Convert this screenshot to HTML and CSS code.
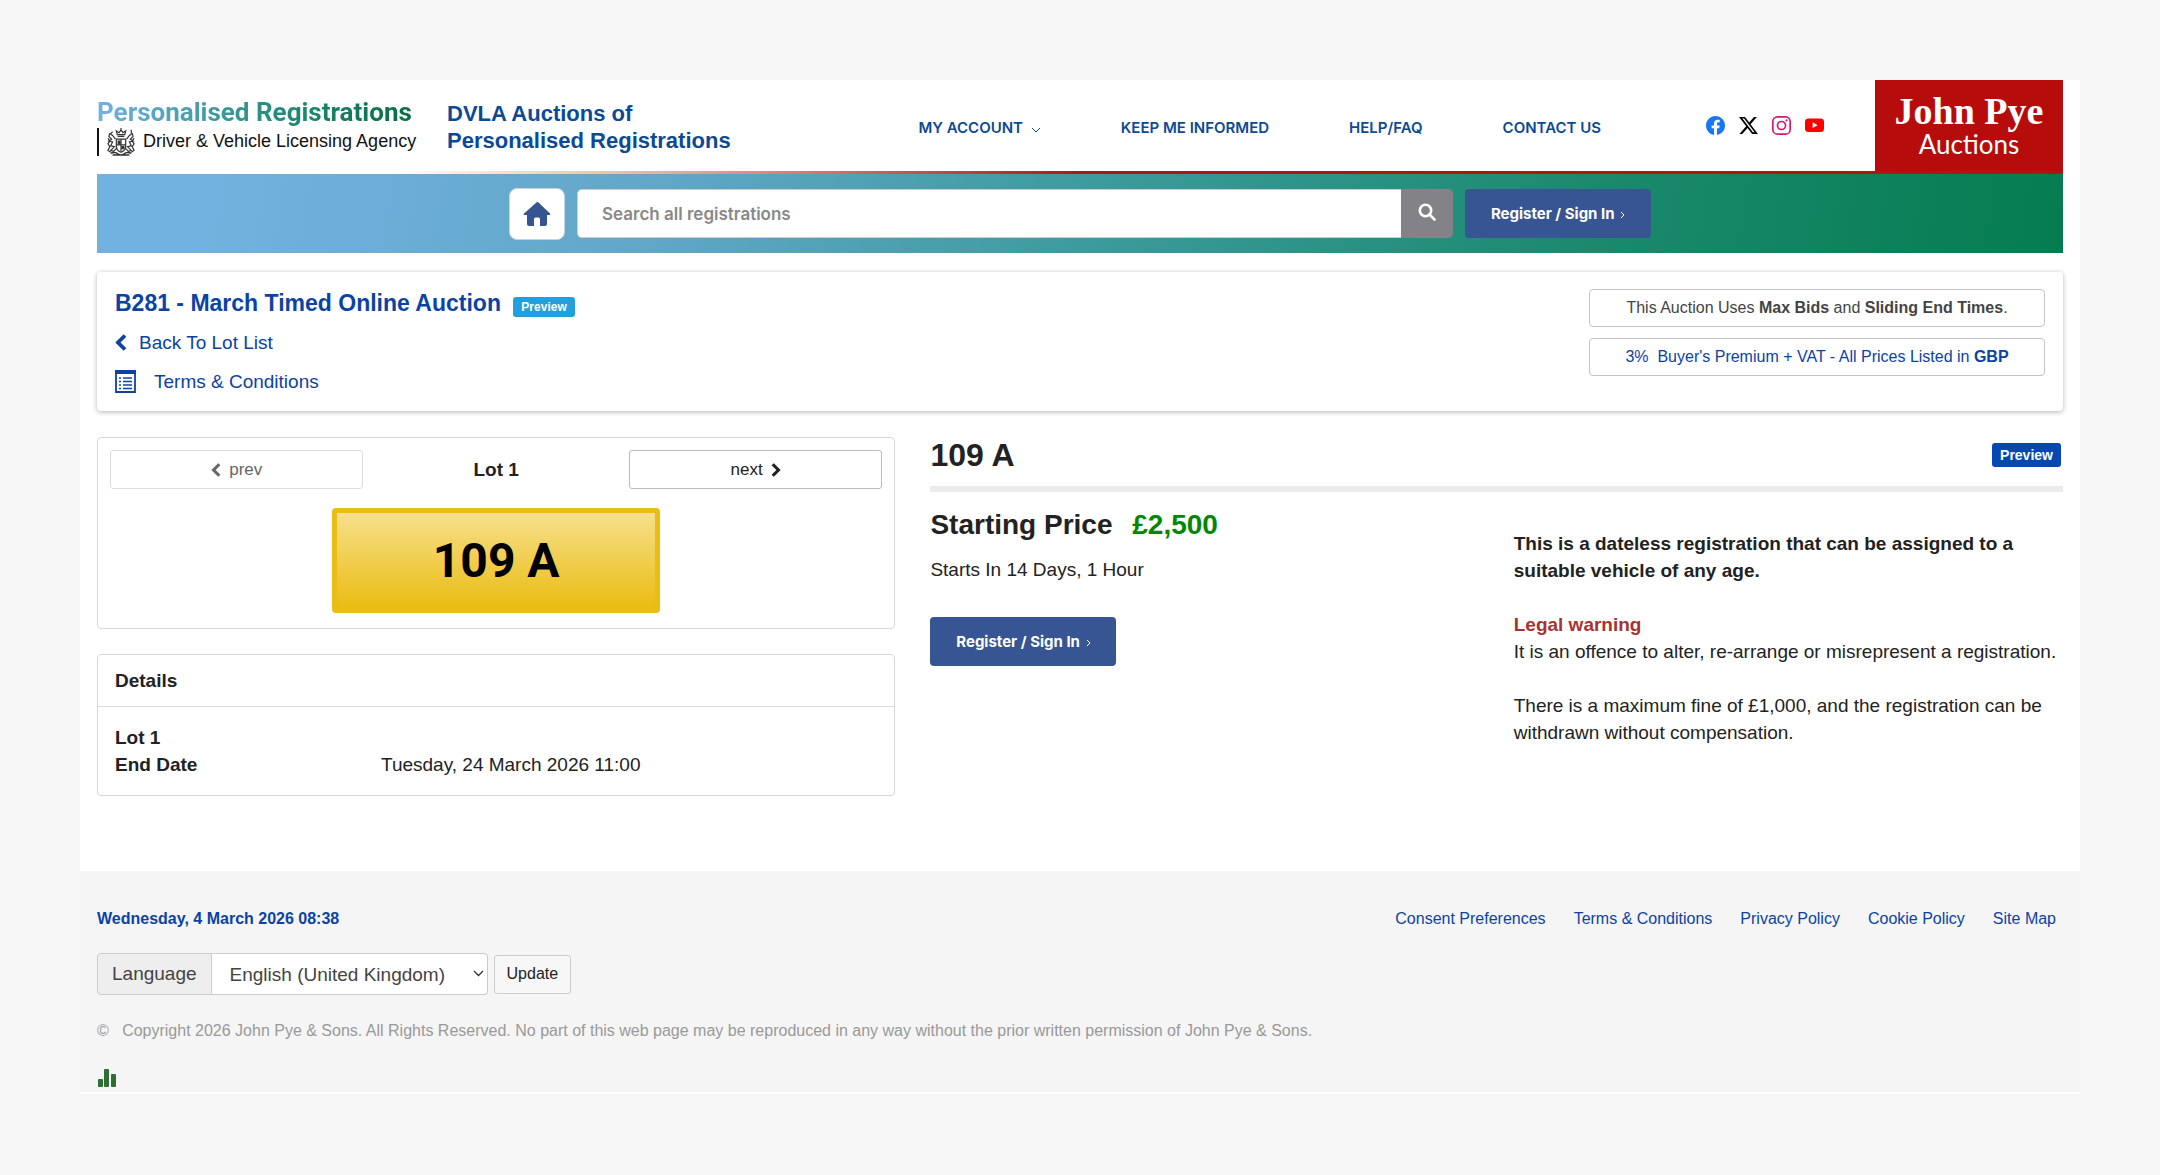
FILE: index.html
```
<!DOCTYPE html>
<html lang="en-GB">
<head>
<meta charset="utf-8">
<meta name="viewport" content="width=device-width, initial-scale=1">
<title>109 A - DVLA Auctions of Personalised Registrations</title>
<link rel="stylesheet" href="styles.css">
</head>

<body>
<div class="page">
  <header class="header">
    <a href="#" class="dvla">
      <span class="dvla-name">Personalised Registrations</span>
      <span class="dvla-agency">
        <svg class="crest" viewBox="0 0 32 30" fill="none" stroke="#333" stroke-width="1.3">
          <path d="M12 7l-1-4 3 2 2-3 2 3 3-2-1 4zM16 2V0M12.500 9h7M11 12h10v8q0 4-5 6-5-2-5-6zM16 12v13M11 18h10"/>
          <path d="M10 12L7 8 4 6 3 9l3 3-3 2 4 1-2 4 4 1-4 4 3 1 4-4M2 11l2 3-2 3 2 3-2 4 3 2M5 6l2-2M22 12l3-4 3-2 1 3-3 3 3 2-4 1 2 4-4 1 4 4-3 1-4-4M30 11l-2 3 2 3-2 3 2 4-3 2M27 6V2"/>
          <path d="M5 27q5-2 8 1 3 2 6 0 3-3 8-1M7 29h18" stroke-width="1.600"/>
          <path d="M13 14h2v3h-2zM17 20h2v2h-2z" fill="#333"/>
        </svg>
        Driver &amp; Vehicle Licensing Agency
      </span>
    </a>
    <div class="site-title">DVLA Auctions of<br>Personalised Registrations</div>
    <nav class="nav">
      <a href="#">MY ACCOUNT <svg width="10" height="6" viewBox="0 0 10 6"><path d="M1 1l4 4 4-4" fill="none" stroke="#0b4a94"/></svg></a>
      <a href="#">KEEP ME INFORMED</a>
      <a href="#">HELP/FAQ</a>
      <a href="#">CONTACT US</a>
    </nav>
    <div class="social">
      <a href="#" aria-label="Facebook"><svg viewBox="0 0 16 16" fill="#1877f2"><path d="M16 8.049c0-4.446-3.582-8.050-8-8.050C3.580 0-.002 3.603-.002 8.050c0 4.017 2.926 7.347 6.750 7.951v-5.625h-2.030V8.050H6.750V6.275c0-2.017 1.195-3.131 3.022-3.131.876 0 1.791.157 1.791.157v1.980h-1.009c-.993 0-1.303.621-1.303 1.258v1.510h2.218l-.354 2.326H9.250V16c3.824-.604 6.750-3.934 6.750-7.951"/></svg></a>
      <a href="#" aria-label="X"><svg viewBox="0 0 16 16" fill="#000"><path d="M12.600.750h2.454l-5.360 6.142L16 15.250h-4.937l-3.867-5.070-4.425 5.070H.316l5.733-6.570L0 .750h5.063l3.495 4.633L12.601.750Zm-.860 13.028h1.360L4.323 2.145H2.865z"/></svg></a>
      <a href="#" aria-label="Instagram"><svg viewBox="0 0 16 16" fill="none" stroke="#d6176f" stroke-width="1.400"><rect x=".7" y=".7" width="14.600" height="14.600" rx="4"/><circle cx="8" cy="8" r="3.400"/><circle cx="12.300" cy="3.700" r=".9" fill="#d6176f" stroke="none"/></svg></a>
      <a href="#" aria-label="YouTube"><svg viewBox="0 0 16 16"><rect y="2" width="16" height="11.500" rx="3" fill="#f00"/><path d="M6.400 5.200l4.200 2.500-4.200 2.500z" fill="#fff"/></svg></a>
    </div>
    <a href="#" class="johnpye"><span class="johnpye-name">John Pye</span><span class="johnpye-sub">Auctions</span></a>
  </header>

  <form class="banner">
    <a href="#" class="home" aria-label="Home"><svg width="28" height="26" viewBox="0 0 28 26" fill="#34558f"><path d="M14 1L1 12.500q-1 1.500 1 1.500h2v9q0 2 2 2h5v-7q0-1.500 1.500-1.500h3q1.500 0 1.500 1.500v7h5q2 0 2-2v-9h2q2 0 1-1.500L15.500 1.500Q14 .3 14 1z"/></svg></a>
    <div class="search">
      <input type="text" class="search-text" placeholder="Search all registrations" aria-label="Search all registrations">
      <button type="button" class="search-btn" aria-label="Search"><svg width="18" height="18" viewBox="0 0 18 18" fill="none" stroke="#fff" stroke-width="2.600"><circle cx="7.500" cy="7.500" r="5.700"/><path d="M11.500 11.500l5 5" stroke-linecap="round"/></svg></button>
    </div>
    <button type="button" class="register">Register / Sign In <svg width="5" height="8" viewBox="0 0 5 8"><path d="M1 1l3 3-3 3" fill="none" stroke="#fff"/></svg></button>
  </form>

  <main>
    <section class="auction">
      <div class="auction-info">
        <h1>B281 - March Timed Online Auction <span class="badge badge-info">Preview</span></h1>
        <a href="#" class="back"><svg width="12" height="17" viewBox="0 0 12 17"><path d="M10 1.500l-7 7 7 7" fill="none" stroke="#0b43a5" stroke-width="3.800"/></svg>Back To Lot List</a>
        <a href="#" class="terms"><svg width="21" height="23" viewBox="0 0 21 23" fill="none" stroke="#0b43a5"><path d="M1 1v21h19V1z" stroke-width="1.800"/><path d="M0 2h21" stroke-width="4"/><path d="M4 8h2M4 11.500h2M4 15h2M4 18.500h2M8 8h9M8 11.500h9M8 15h9M8 18.500h9" stroke-width="1.600"/></svg>Terms &amp; Conditions</a>
      </div>
      <div class="auction-notes">
        <div class="note">This Auction Uses <b>Max Bids</b> and <b>Sliding End Times</b>.</div>
        <a href="#" class="note">3%&nbsp; Buyer's Premium + VAT - All Prices Listed in <b>GBP</b></a>
      </div>
    </section>

    <div class="lot">
      <div class="lot-left">
        <section class="card lot-card">
          <div class="pager">
            <button type="button" disabled><svg width="10" height="14" viewBox="0 0 12 17"><path d="M10 1.500l-7 7 7 7" fill="none" stroke="#666" stroke-width="3.800"/></svg>prev</button>
            <b>Lot 1</b>
            <button type="button">next<svg width="10" height="14" viewBox="0 0 12 17"><path d="M2 1.500l7 7-7 7" fill="none" stroke="#222" stroke-width="3.800"/></svg></button>
          </div>
          <div class="plate">109 A</div>
        </section>
        <section class="card">
          <h2 class="card-title">Details</h2>
          <table class="details">
            <colgroup><col class="details-label"><col></colgroup>
            <tr><th colspan="2">Lot 1</th></tr>
            <tr><th>End Date</th><td>Tuesday, 24 March 2026 11:00</td></tr>
          </table>
        </section>
      </div>

      <div class="lot-right">
        <div class="lot-head">
          <h2>109 A</h2>
          <span class="badge">Preview</span>
        </div>
        <div class="lot-body">
          <div class="bid">
            <h3>Starting Price <span class="price">£2,500</span></h3>
            <p>Starts In 14 Days, 1 Hour</p>
            <button type="button" class="register">Register / Sign In <svg width="5" height="8" viewBox="0 0 5 8"><path d="M1 1l3 3-3 3" fill="none" stroke="#fff"/></svg></button>
          </div>
          <div class="legal">
            <p><b>This is a dateless registration that can be assigned to a suitable vehicle of any age.</b></p>
            <p><b class="warning">Legal warning</b><br>It is an offence to alter, re-arrange or misrepresent a registration.</p>
            <p>There is a maximum fine of £1,000, and the registration can be withdrawn without compensation.</p>
          </div>
        </div>
      </div>
    </div>
  </main>

  <footer class="footer">
    <div class="footer-top">
      <b>Wednesday, 4 March 2026 08:38</b>
      <nav class="footer-links">
        <a href="#">Consent Preferences</a>
        <a href="#">Terms &amp; Conditions</a>
        <a href="#">Privacy Policy</a>
        <a href="#">Cookie Policy</a>
        <a href="#">Site Map</a>
      </nav>
    </div>
    <form class="language">
      <label for="language">Language</label>
      <div class="select">
        <select id="language"><option>English (United Kingdom)</option></select>
        <svg width="11" height="7" viewBox="0 0 11 7"><path d="M1 1l4.500 4.500L10 1" fill="none" stroke="#333" stroke-width="1.300"/></svg>
      </div>
      <button type="button">Update</button>
    </form>
    <p class="copyright">©&nbsp;&nbsp; Copyright 2026 John Pye &amp; Sons. All Rights Reserved. No part of this web page may be reproduced in any way without the prior written permission of John Pye &amp; Sons.</p>
    <svg class="stats" width="20" height="18" viewBox="0 0 20 18" fill="#2f6f33"><rect x="1" y="10" width="5" height="8" rx="1"/><rect x="7" width="5" height="18" rx="1"/><rect x="14" y="5" width="5" height="13" rx="1"/></svg>
  </footer>
</div>
</body>
</html>
```
FILE: styles.css
```
* {
    box-sizing: border-box;
}

body {
    margin: 0;
    padding: 80px;
    background-color: #f7f7f7;
    color: #222;
    font-family: "Liberation Sans", Arial, sans-serif;
    font-size: 19px;
    line-height: 27px;
}

h1, h2, h3, p {
    margin: 0;
}

a {
    color: #0b43a5;
    text-decoration: none;
}

button {
    font-family: inherit;
    cursor: pointer;
}

svg {
    flex: none;
}

.page {
    background-color: #fff;
    padding-bottom: 2px;
}

/* header */
.header {
    display: flex;
    align-items: center;
    height: 94px;
    margin: 0 17px;
    border-bottom: 3px solid;
    border-image: linear-gradient(90deg, #fff 15%, #f3b9a5 27%, #b01515 50%, #b01515) 1;
}

.dvla {
    color: #111;
    width: 322px;
    white-space: nowrap;
}

.dvla-name {
    display: block;
    font-family: Roboto, "Liberation Sans", sans-serif;
    font-size: 26px;
    line-height: 32px;
    font-weight: bold;
    background: linear-gradient(90deg, #72b2e0, #1f8a75 60%, #066b3f);
    background-clip: text;
    color: transparent;
}

.dvla-agency {
    display: flex;
    align-items: center;
    gap: 6px;
    border-left: 2px solid #111;
    padding-left: 6px;
    font-size: 18px;
}

.crest {
    width: 32px;
    height: 28px;
}

.site-title {
    margin-left: 28px;
    padding-top: 2px;
    color: #0b4a94;
    font-size: 22px;
    font-weight: bold;
}

.nav {
    display: flex;
    gap: 80px;
    margin-left: auto;
    padding-top: 4px;
    font-family: Inter, "Open Sans", sans-serif;
    font-size: 15px;
    font-weight: 600;
}

.nav a {
    color: #0b4a94;
}

.nav svg {
    margin-left: 4px;
}

.social {
    display: flex;
    gap: 14px;
    margin: 0 51px 0 105px;
}

.social a {
    display: flex;
}

.social svg {
    width: 19px;
    height: 19px;
}

.johnpye {
    display: flex;
    flex-direction: column;
    align-items: center;
    align-self: stretch;
    width: 188px;
    padding-top: 12px;
    background-color: #b60c0c;
    color: #fff;
    font-family: "Liberation Serif", serif;
}

.johnpye-name {
    font-size: 38px;
    line-height: 38px;
    font-weight: bold;
}

.johnpye-sub {
    font-family: Lato, sans-serif;
    font-size: 26px;
    line-height: 28px;
}

/* search banner */
.banner {
    display: flex;
    justify-content: center;
    align-items: center;
    gap: 12px;
    height: 79px;
    margin: 0 17px;
    background: linear-gradient(100deg, #72b2e0 5%, #62a7c8 28%, #3a9a9a 52%, #1b8a6e 75%, #057c50);
}

.home {
    display: flex;
    align-items: center;
    justify-content: center;
    width: 56px;
    height: 52px;
    background-color: #fff;
    border: 1px solid #c8d4dc;
    border-radius: 8px;
}

.search {
    display: flex;
    width: 876px;
    height: 49px;
}

.search-text {
    flex: 1;
    min-width: 0;
    padding: 0 24px;
    border: 1px solid #ccc;
    border-right: 0;
    border-radius: 5px 0 0 5px;
    font-family: Inter, "Open Sans", sans-serif;
    font-size: 17px;
    font-weight: 600;
}

.search-text::placeholder {
    color: #888;
}

.search-btn {
    width: 52px;
    border: 0;
    border-radius: 0 5px 5px 0;
    background-color: #828287;
}

.register {
    width: 186px;
    height: 49px;
    border: 0;
    border-radius: 4px;
    background-color: #365592;
    color: #fff;
    font-family: Inter, "Open Sans", sans-serif;
    font-size: 15px;
    font-weight: 700;
}

.register svg {
    margin-left: 2px;
}

/* auction summary */
main {
    padding: 19px 17px 75px;
}

.auction {
    display: flex;
    justify-content: space-between;
    padding: 17px 18px 16px;
    border-radius: 4px;
    box-shadow: 0 1px 5px rgba(0, 0, 0, .3);
}

.auction-info {
    display: flex;
    flex-direction: column;
    gap: 12px;
}

.auction h1 {
    font-size: 23px;
    line-height: 28px;
    color: #0b43a5;
}

.back, .terms {
    display: flex;
    align-items: center;
}

.back {
    gap: 12px;
}

.terms {
    gap: 18px;
}

.auction-notes {
    display: flex;
    flex-direction: column;
    gap: 11px;
    width: 456px;
}

.note {
    height: 38px;
    border: 1px solid #c4c4c4;
    border-radius: 4px;
    color: #444;
    font-size: 16px;
    line-height: 36px;
    text-align: center;
}

a.note {
    color: #0b43a5;
}

.badge {
    display: inline-block;
    padding: 0 8px;
    border-radius: 3px;
    background-color: #0648b0;
    color: #fff;
    font-size: 14px;
    line-height: 24px;
    font-weight: bold;
}

.badge-info {
    margin-left: 6px;
    background-color: #249fde;
    font-size: 12px;
    line-height: 20px;
}

/* lot */
.lot {
    display: grid;
    grid-template-columns: 798fr 1132fr;
    gap: 35px;
    margin-top: 26px;
}

.card {
    border: 1px solid #d8d8d8;
    border-radius: 4px;
}

.lot-card {
    padding: 12px 12px 15px;
    margin-bottom: 25px;
}

.pager {
    display: grid;
    grid-template-columns: 1fr 1fr 1fr;
    align-items: center;
    text-align: center;
    gap: 6px;
}

.pager button {
    display: flex;
    align-items: center;
    justify-content: center;
    gap: 8px;
    height: 39px;
    border: 1px solid #bbb;
    border-radius: 3px;
    background-color: #fff;
    color: #222;
    font-size: 17px;
}

.pager button:disabled {
    border-color: #ddd;
    color: #666;
}

.plate {
    width: 328px;
    margin: 19px auto 0;
    border: 5px solid #e9bd15;
    border-radius: 4px;
    background: linear-gradient(#f6e08b, #ebbc12);
    color: #000;
    font-family: Roboto, "Liberation Sans", sans-serif;
    font-size: 48px;
    line-height: 95px;
    font-weight: bold;
    text-align: center;
}

.card-title {
    padding: 12px 17px;
    border-bottom: 1px solid #ddd;
    font-size: 19px;
}

.details {
    width: 100%;
    padding: 17px;
    border-spacing: 0;
    table-layout: fixed;
}

.details th, .details td {
    padding: 0;
    text-align: left;
}

.details-label {
    width: 266px;
}

.lot-head {
    display: flex;
    justify-content: space-between;
    align-items: center;
    height: 55px;
    padding: 0 2px 13px 0;
    border-bottom: 6px solid #ebebeb;
}

.lot-head h2 {
    font-size: 32px;
    font-weight: bold;
}

.lot-body {
    display: grid;
    grid-template-columns: 583fr 549fr;
}

.bid h3 {
    margin: 19px 0 18px;
    font-size: 28px;
}

.bid p {
    margin-bottom: 34px;
}

.price {
    margin-left: 12px;
    color: #080;
}

.legal {
    padding-top: 38px;
}

.legal p {
    margin-bottom: 27px;
}

.warning {
    color: #a83232;
}

/* footer */
.footer {
    padding: 34px 24px 5px 17px;
    background-color: #f5f5f5;
    font-size: 16px;
}

.footer-top {
    display: flex;
    justify-content: space-between;
    color: #0b43a5;
}

.footer-links {
    display: flex;
    gap: 28px;
}

.language {
    display: flex;
    align-items: center;
    margin-top: 21px;
    color: #444;
    font-size: 19px;
}

.language label {
    height: 42px;
    padding: 0 14px;
    border: 1px solid #ccc;
    border-radius: 4px 0 0 4px;
    background-color: #eee;
    line-height: 40px;
}

.select {
    position: relative;
}

.select select {
    appearance: none;
    display: block;
    width: 276px;
    height: 42px;
    padding: 0 18px;
    border: 1px solid #ccc;
    border-left: 0;
    border-radius: 0 4px 4px 0;
    background-color: #fff;
    color: #444;
    font-family: inherit;
    font-size: 19px;
}

.select svg {
    position: absolute;
    right: 4px;
    top: 17px;
}

.language button {
    height: 39px;
    margin-left: 6px;
    padding: 0 12px;
    border: 1px solid #ccc;
    border-radius: 3px;
    background-color: #f7f7f7;
    color: #222;
    font-size: 16px;
}

.copyright {
    margin-top: 22px;
    color: #999;
}

.stats {
    display: block;
    margin-top: 25px;
}
```
